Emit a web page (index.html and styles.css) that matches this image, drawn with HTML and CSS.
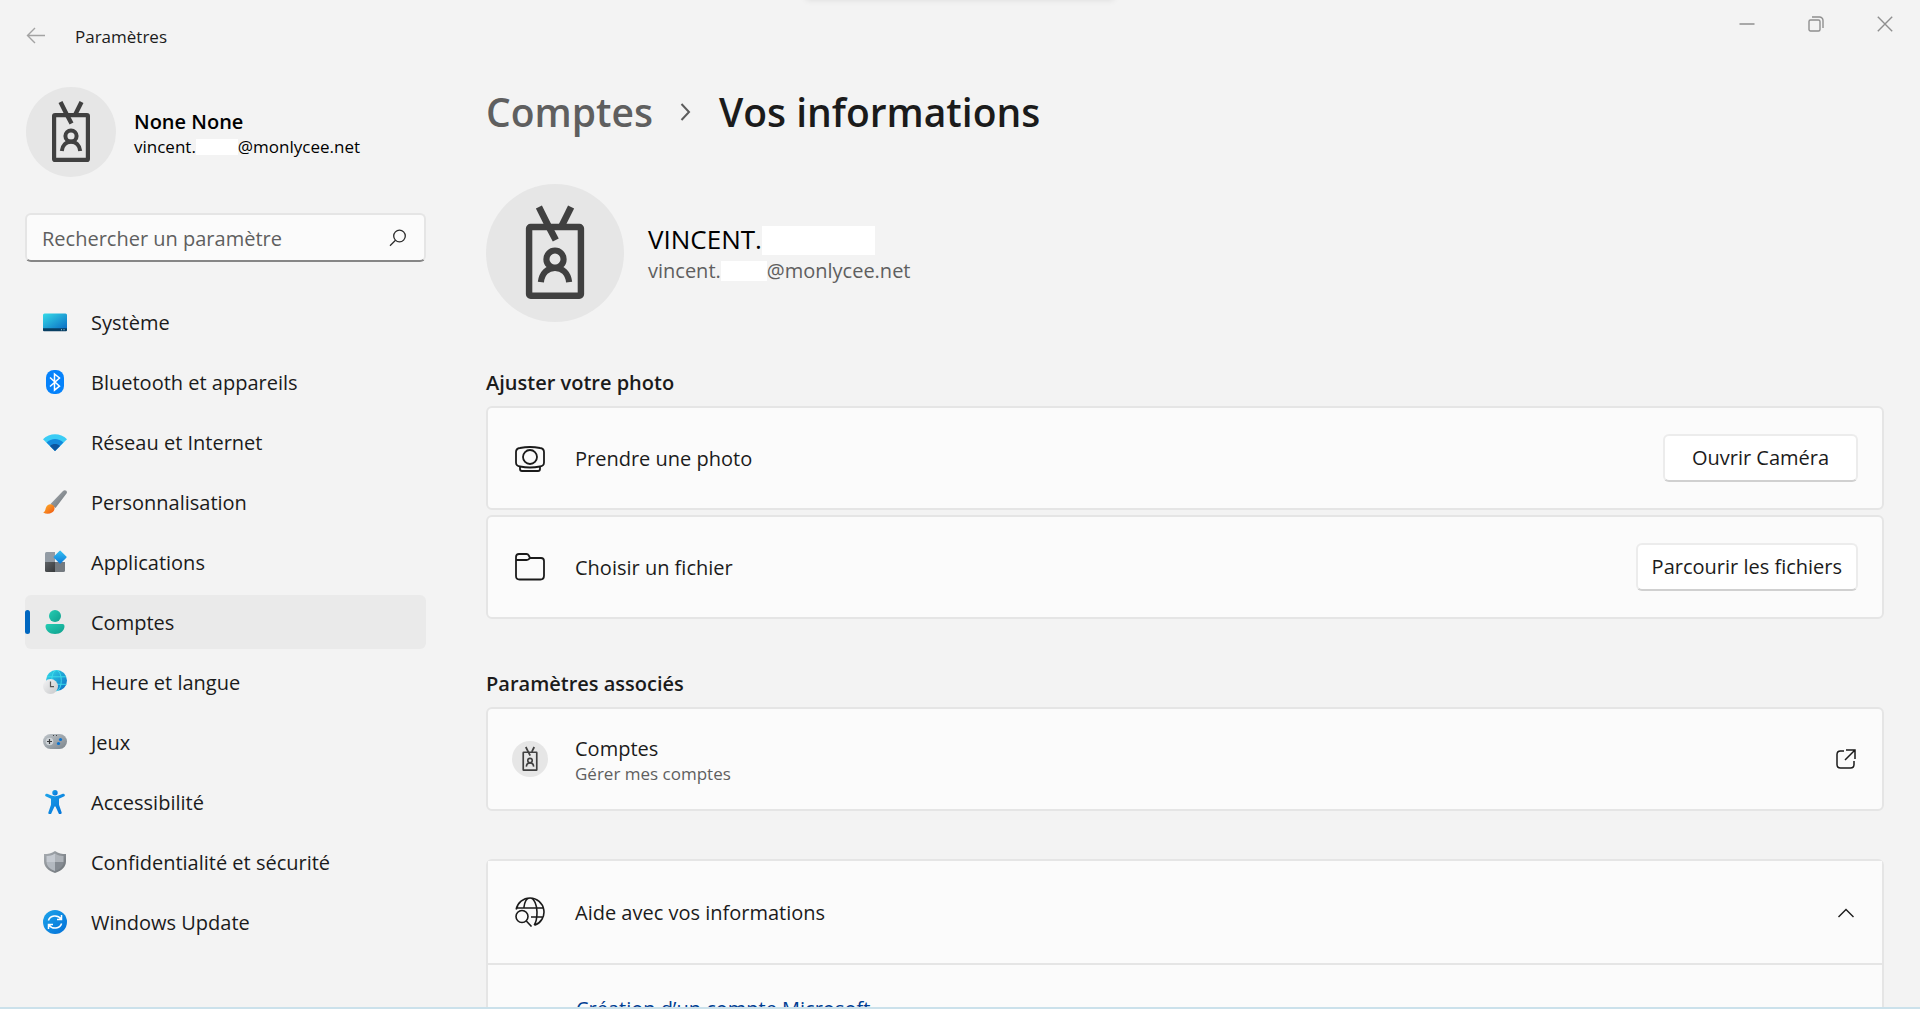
FILE: index.html
```
<!DOCTYPE html>
<html lang="fr">
<head>
    <meta charset="UTF-8">
    <meta name="viewport" content="width=device-width, initial-scale=1.0">
    <title>Paramètres</title>
    <link rel="stylesheet" href="styles.css">
</head>
<body>
    <svg class="sprite" aria-hidden="true">
        <defs>
            <linearGradient id="g-screen" x1="0" y1="0" x2="1" y2="1">
                <stop offset="0" stop-color="#35dbe8"/>
                <stop offset="1" stop-color="#0a6cc4"/>
            </linearGradient>
            <linearGradient id="g-teal" x1="0" y1="0" x2="1" y2="1">
                <stop offset="0" stop-color="#25cdb4"/>
                <stop offset="1" stop-color="#0f9f8c"/>
            </linearGradient>
            <linearGradient id="g-blue" x1="0" y1="0" x2="1" y2="1">
                <stop offset="0" stop-color="#1da4ea"/>
                <stop offset="1" stop-color="#0270d8"/>
            </linearGradient>
            <linearGradient id="g-gray" x1="0" y1="0" x2="1" y2="1">
                <stop offset="0" stop-color="#c0c6cb"/>
                <stop offset="1" stop-color="#7b848b"/>
            </linearGradient>
            <linearGradient id="g-shield" x1="0" y1="0" x2="1" y2="1">
                <stop offset="0" stop-color="#a9aeb3"/>
                <stop offset="1" stop-color="#6a7075"/>
            </linearGradient>
            <linearGradient id="g-dark" x1="0" y1="0" x2="1" y2="1">
                <stop offset="0" stop-color="#5d6164"/>
                <stop offset="1" stop-color="#37393b"/>
            </linearGradient>
            <linearGradient id="g-diamond" x1="0" y1="0" x2="1" y2="1">
                <stop offset="0" stop-color="#35c3f3"/>
                <stop offset="1" stop-color="#0b78d8"/>
            </linearGradient>
            <linearGradient id="g-orange" x1="0" y1="0" x2="1" y2="1">
                <stop offset="0" stop-color="#ffb52b"/>
                <stop offset="1" stop-color="#ee5413"/>
            </linearGradient>
            <linearGradient id="g-clock" x1="0" y1="0" x2="1" y2="1">
                <stop offset="0" stop-color="#f4f4f5"/>
                <stop offset="1" stop-color="#c6c8ca"/>
            </linearGradient>
        </defs>
        <symbol id="badge" viewBox="0 0 90 90">
            <circle cx="45" cy="45" r="45" fill="#e6e6e6"/>
            <g fill="none" stroke="#404040" stroke-width="4.2" stroke-linejoin="round">
                <rect x="28.1" y="28.1" width="33.8" height="44.8" rx="1"/>
                <path d="M34.500 15l6.500 13 4.500 8.500" stroke-width="4.400"/>
                <path d="M55.500 15L49.500 27" stroke-width="4.400"/>
                <circle cx="45" cy="49" r="5.600" stroke-width="4"/>
                <path d="M35.800 64c.6-5.800 4.300-9.300 9.200-9.300s8.600 3.500 9.200 9.300" stroke-width="4"/>
            </g>
        </symbol>
    </svg>

    <div class="window">
        <header class="titlebar">
            <button type="button" class="back" aria-label="Retour">
                <svg width="20" height="18" viewBox="0 0 20 18" fill="none" stroke="#a3a3a3" stroke-width="1.400"><path d="M19 8.500H1.500M9 1L1.500 8.500 9 16"/></svg>
            </button>
            <span class="app-title">Paramètres</span>
            <div class="controls">
                <button type="button" aria-label="Réduire">
                    <svg width="16" height="16" viewBox="0 0 16 16" fill="none" stroke="#8f8f8f" stroke-width="1.500"><path d="M0.500 8h15"/></svg>
                </button>
                <button type="button" aria-label="Restaurer">
                    <svg width="16" height="16" viewBox="0 0 16 16" fill="none" stroke="#8f8f8f" stroke-width="1.400"><rect x="1" y="4" width="11" height="11" rx="1.500"/><path d="M4 1h7.500a3.500 3.500 0 0 1 3.500 3.500V12"/></svg>
                </button>
                <button type="button" aria-label="Fermer">
                    <svg width="16" height="16" viewBox="0 0 16 16" fill="none" stroke="#8f8f8f" stroke-width="1.400"><path d="M.8.8l14.400 14.400M15.200.8L.8 15.200"/></svg>
                </button>
            </div>
        </header>

        <div class="content">
            <aside class="sidebar">
                <div class="profile">
                    <svg class="avatar"><use href="#badge"/></svg>
                    <div class="profile-text">
                        <p class="profile-name">None None</p>
                        <p class="profile-mail">vincent.<span class="mask"></span>@monlycee.net</p>
                    </div>
                </div>

                <form class="search">
                    <input type="text" placeholder="Rechercher un paramètre" aria-label="Rechercher un paramètre">
                    <button type="submit" aria-label="Rechercher">
                        <svg width="18" height="18" viewBox="0 0 18 18" fill="none" stroke="#2b2b2b" stroke-width="1.300"><circle cx="10.500" cy="7" r="5.800"/><path d="M6.500 11.200L1 16.700"/></svg>
                    </button>
                </form>

                <nav>
                    <a href="#">
                        <svg viewBox="0 0 24 24"><path d="M0 5a1.500 1.500 0 0 1 1.500-1.500h21A1.500 1.500 0 0 1 24 5v14H0z" fill="url(#g-screen)"/><path d="M0 18.300h24v1.900a1 1 0 0 1-1 1H1a1 1 0 0 1-1-1z" fill="#083f63"/><path d="M18 19.200h1v1h-1zM20.500 19.200h1v1h-1z" fill="#a8d0e4"/></svg>
                        Système
                    </a>
                    <a href="#">
                        <svg viewBox="0 0 24 24"><rect x="3" width="18" height="24" rx="8" fill="#0582fb"/><path d="M7 7.500l9.500 8.700-5 4V4l5 4L7 16.500" fill="none" stroke="#fff" stroke-width="1.500"/></svg>
                        Bluetooth et appareils
                    </a>
                    <a href="#">
                        <svg viewBox="0 0 24 24"><path d="M0 9.200C6.500 2.500 17.500 2.500 24 9.200L12 21z" fill="#3accf5"/><path d="M3.600 12.600c4.600-4.700 12.200-4.700 16.800 0L12 21z" fill="#1489dc"/><path d="M7 15.900c2.800-2.600 7.200-2.600 10 0L12 21z" fill="#0c559f"/></svg>
                        Réseau et Internet
                    </a>
                    <a href="#">
                        <svg viewBox="0 0 24 24"><path d="M7.500 14L20 .9c1-1 2.500-1 3.300-.1.800.8.800 1.800.2 2.800L12.500 18z" fill="url(#g-shield)"/><path d="M.2 22.500c2-1 2-2.500 2.600-4.500.9-3.300 4.600-5 7.400-2.800 2.400 2.200 1.400 5.800-1.200 7.300-2.500 1.500-6 1.700-8.800 0z" fill="url(#g-orange)"/></svg>
                        Personnalisation
                    </a>
                    <a href="#">
                        <svg viewBox="0 0 24 24"><path d="M3.500 2H12v10H2V3.500A1.500 1.500 0 0 1 3.500 2z" fill="#929ba4"/><path d="M12 12h10v8.500a1.500 1.500 0 0 1-1.500 1.500H12z" fill="#747a80"/><path d="M2 12h10v10H3.500A1.500 1.500 0 0 1 2 20.500z" fill="url(#g-dark)"/><rect x="12.200" y="2.200" width="9.800" height="9.800" rx="1" transform="rotate(45 17.100 7.100)" fill="url(#g-diamond)"/></svg>
                        Applications
                    </a>
                    <a href="#" class="active">
                        <svg viewBox="0 0 24 24"><circle cx="12" cy="6" r="6" fill="url(#g-teal)"/><path d="M4.500 14h15a2 2 0 0 1 2 2c0 4.600-3.800 8-9.500 8s-9.500-3.400-9.500-8a2 2 0 0 1 2-2z" fill="url(#g-teal)"/></svg>
                        Comptes
                    </a>
                    <a href="#">
                        <svg viewBox="0 0 24 24"><circle cx="13.500" cy="10.500" r="10.500" fill="url(#g-screen)"/><g fill="none" stroke="#3fe0ec" stroke-width=".9"><ellipse cx="13.500" cy="10.500" rx="4.800" ry="10.300"/><path d="M4 6.800h19M3.500 14.300h20"/></g><circle cx="7.500" cy="16.500" r="7.500" fill="url(#g-clock)"/><path d="M7.500 11.500v5.200h3.500" fill="none" stroke="#555" stroke-width="1.200"/></svg>
                        Heure et langue
                    </a>
                    <a href="#">
                        <svg viewBox="0 0 24 24"><rect y="4" width="24" height="15" rx="7.500" fill="url(#g-gray)"/><circle cx="6.500" cy="11.500" r="3.800" fill="#ced3d7"/><path d="M6.500 9v5M4 11.500h5" stroke="#383b3e" stroke-width="1.200"/><circle cx="17.500" cy="9.500" r="1.600" fill="#0a72d0"/><circle cx="15.500" cy="13.500" r="1.600" fill="#0a72d0"/><path d="M10 5h1v1h-1zM13 5h1v1h-1z" fill="#444"/></svg>
                        Jeux
                    </a>
                    <a href="#">
                        <svg viewBox="0 0 24 24" fill="url(#g-blue)"><circle cx="12" cy="2.700" r="2.700"/><path d="M4.200 3.800l5 1.900q2.800.9 5.600 0l5-1.900a1.500 1.500 0 0 1 1.100 2.800L16 8.700v6.100l2.500 7.300a1.500 1.500 0 0 1-2.900 1.200L12.500 16.500h-1l-3.100 6.800a1.500 1.500 0 0 1-2.900-1.200L8 14.800V8.700L3.100 6.600a1.500 1.500 0 0 1 1.100-2.800z"/></svg>
                        Accessibilité
                    </a>
                    <a href="#">
                        <svg viewBox="0 0 24 24"><path d="M12 1c3.500 2.500 7 3 11 3v7c0 6-4 9.500-11 12C5 20.500 1 17 1 11V4c4 0 7.500-.5 11-3z" fill="url(#g-shield)"/><path d="M12 3.500c2.800 2 5.500 2.400 8.500 2.500V12H12z" fill="#aeb3b9"/><path d="M12 3.500C9.200 5.500 6.500 5.900 3.500 6v6H12z" fill="#c5cad1"/><path d="M3.500 12c.3 4.500 3.500 7 8.500 9v-9z" fill="#b3b9c0"/><path d="M20.500 12c-.3 4.500-3.500 7-8.500 9v-9z" fill="#858b92"/></svg>
                        Confidentialité et sécurité
                    </a>
                    <a href="#">
                        <svg viewBox="0 0 24 24"><circle cx="12" cy="12" r="12" fill="url(#g-blue)"/><path d="M5.400 10.500c1.600-5.200 9-6.400 12.800-1.500M18.600 13.500c-1.600 5.200-9 6.400-12.800 1.500M18.500 5v4.500H14M5.500 19v-4.500H10" fill="none" stroke="#fff" stroke-width="1.500"/></svg>
                        Windows Update
                    </a>
                </nav>
            </aside>

            <main>
                <h1><a href="#">Comptes</a><svg width="14" height="20" viewBox="0 0 14 20" fill="none" stroke="#5c5c5c" stroke-width="2"><path d="M2.500 2l7.500 8-7.500 8"/></svg>Vos informations</h1>

                <div class="account">
                    <svg class="avatar"><use href="#badge"/></svg>
                    <div>
                        <p class="account-name">VINCENT.<span class="mask"></span></p>
                        <p class="account-mail">vincent.<span class="mask"></span>@monlycee.net</p>
                    </div>
                </div>

                <section>
                    <h2>Ajuster votre photo</h2>
                    <div class="card">
                        <svg class="card-icon" viewBox="0 -2 30 30" fill="none" stroke="#1b1b1b" stroke-width="1.800"><path d="M5 3Q15 1 25 3q4 .5 4 4v10.500q0 3.500-4 4-10 2-20 0-4-.5-4-4V7q0-3.500 4-4zM5 22v2q0 2 2 2h16q2 0 2-2v-2"/><circle cx="15" cy="12" r="7"/></svg>
                        <span class="card-label">Prendre une photo</span>
                        <button type="button" class="btn btn-wide">Ouvrir Caméra</button>
                    </div>
                    <div class="card">
                        <svg class="card-icon" viewBox="0 0 30 30" fill="none" stroke="#1b1b1b" stroke-width="1.800"><path d="M1 8V5q0-3 3-3h7.500q1.500 0 2.300 1.500L15 6h11q3 0 3 3v14.500q0 4-3.500 4h-21Q1 27.500 1 24zh10.500q1.500 0 2.300-.8L15 6"/></svg>
                        <span class="card-label">Choisir un fichier</span>
                        <button type="button" class="btn">Parcourir les fichiers</button>
                    </div>
                </section>

                <section>
                    <h2>Paramètres associés</h2>
                    <a href="#" class="card">
                        <svg class="card-icon avatar"><use href="#badge"/></svg>
                        <span class="card-label">Comptes<small>Gérer mes comptes</small></span>
                        <svg class="card-end" viewBox="0 0 20 20" fill="none" stroke="#1b1b1b" stroke-width="1.500"><path d="M8 2H4.500Q1 2 1 5.500v10Q1 19 4.500 19h10q3.500 0 3.500-3.500V12M10 1h9v9M19 1L9 11"/></svg>
                    </a>
                </section>

                <section>
                    <div class="expander">
                        <button type="button" class="card" aria-expanded="true">
                            <svg class="card-icon" viewBox="0 0 30 30" fill="none" stroke="#1b1b1b" stroke-width="1.600"><path d="M1.200 12.500a14 14 0 1 1 18.300 15.800M2 11h26M16 20h12.500M8.800 11C9.500 5 12 1 15 1c4.500 0 7 8 7 14 0 5.500-1 10.500-2.800 13.200"/><circle cx="7" cy="19.500" r="6"/><path d="M11.300 24l5.200 5.500"/></svg>
                            <span class="card-label">Aide avec vos informations</span>
                            <svg class="card-end" viewBox="0 0 20 20" fill="none" stroke="#1b1b1b" stroke-width="1.400"><path d="M2.500 15l7.500-7.500 7.500 7.500"/></svg>
                        </button>
                        <div class="expander-body">
                            <a href="#">Création d’un compte Microsoft</a>
                        </div>
                    </div>
                </section>
            </main>
        </div>
    </div>
</body>
</html>
```
FILE: styles.css
```
* {
    box-sizing: border-box;
}
body {
    margin: 0;
    background-color: #f3f3f3;
    color: #1b1b1b;
    font-family: "Open Sans", "Noto Sans", sans-serif;
    font-size: 20px;
    line-height: 28px;
}
p, h1, h2 {
    margin: 0;
}
a {
    color: inherit;
    text-decoration: none;
}
button, input {
    font: inherit;
    color: inherit;
}
button {
    background: none;
    border: none;
    padding: 0;
}
svg {
    display: block;
    flex-shrink: 0;
}
.sprite {
    position: absolute;
    width: 0;
    height: 0;
}
.window {
    position: relative;
    height: 100vh;
    display: flex;
    flex-direction: column;
    overflow: hidden;
    border-bottom: 2px solid #cbe1eb;
}
/* ombre en haut de la fenêtre */
.window::before {
    content: "";
    position: absolute;
    top: -8px;
    left: 42%;
    width: 16%;
    height: 8px;
    box-shadow: 0 0 6px rgba(0,0,0,0.1);
}

/* barre de titre */
.titlebar {
    display: flex;
    align-items: center;
    height: 72px;
    padding: 0 1px 0 26px;
    flex-shrink: 0;
}
.back {
    width: 49px;
}
.app-title {
    padding-top: 2px;
    font-size: 17px;
}
.controls {
    display: flex;
    align-self: flex-start;
    margin-left: auto;
}
.controls button {
    display: flex;
    align-items: center;
    justify-content: center;
    width: 69px;
    height: 48px;
}
.content {
    display: flex;
    flex: 1;
    min-height: 0;
}

/* menu de gauche */
.sidebar {
    width: 426px;
    padding: 15px 0 0 25px;
    flex-shrink: 0;
}
.profile {
    display: flex;
    align-items: center;
    gap: 18px;
    padding-left: 1px;
    color: #000;
}
.profile .avatar {
    width: 90px;
    height: 90px;
}
.profile-text {
    padding-top: 4px;
}
.profile-name {
    font-weight: 600;
    line-height: 26px;
}
.profile-mail {
    font-size: 17px;
    line-height: 24px;
}
.mask {
    display: inline-block;
    width: 42px;
    height: 16px;
    background-color: #fff;
    vertical-align: -2px;
}
.search {
    display: flex;
    align-items: center;
    height: 49px;
    margin: 36px 0 33px;
    padding: 0 17px 0 15px;
    background-color: #fbfbfb;
    border: 2px solid #e5e5e5;
    border-bottom-color: #868686;
    border-radius: 6px;
}
.search input {
    flex: 1;
    min-width: 0;
    padding: 2px 0 0;
    background: none;
    border: none;
    outline: none;
}
.search input::placeholder {
    color: #5f5f5f;
    opacity: 1;
}
nav {
    display: flex;
    flex-direction: column;
    gap: 6px;
}
nav a {
    display: flex;
    align-items: center;
    gap: 24px;
    height: 54px;
    padding: 2px 0 0 18px;
    border-radius: 6px;
}
nav svg {
    width: 24px;
    height: 24px;
    margin-bottom: 2px;
}
nav .active {
    position: relative;
    background-color: #eaeaea;
}
nav .active::before {
    content: "";
    position: absolute;
    left: 0;
    top: 15px;
    width: 5px;
    height: 24px;
    border-radius: 3px;
    background-color: #0067c0;
}

/* contenu */
main {
    flex: 1;
    min-width: 0;
    padding: 12px 36px 0 60px;
}
h1 {
    display: flex;
    align-items: center;
    gap: 26px;
    font-size: 39px;
    font-weight: 600;
    line-height: 56px;
}
h1 a {
    color: #5f5f5f;
}
.account {
    display: flex;
    align-items: center;
    gap: 24px;
    margin: 44px 0;
}
.account .avatar {
    width: 138px;
    height: 138px;
}
.account-name {
    font-size: 26px;
    line-height: 36px;
    color: #000;
}
.account-name .mask {
    width: 113px;
    height: 29px;
    vertical-align: -6px;
}
.account-mail {
    color: #5f5f5f;
}
.account-mail .mask {
    width: 46px;
    height: 20px;
    vertical-align: -3px;
}
section {
    margin-bottom: 48px;
}
h2 {
    margin-bottom: 6px;
    font-size: 20px;
    font-weight: 600;
    line-height: 34px;
}
.card {
    display: flex;
    align-items: center;
    width: 100%;
    height: 104px;
    padding: 0 24px 0 27px;
    background-color: #fbfbfb;
    border: 2px solid #e5e5e5;
    border-radius: 6px;
    text-align: left;
}
.card + .card {
    margin-top: 5px;
}
.card-icon {
    width: 30px;
    height: 30px;
    margin-right: 30px;
}
.card-icon.avatar {
    width: 36px;
    height: 36px;
    margin: 0 27px 0 -3px;
}
.card-label {
    flex: 1;
    padding-top: 2px;
}
.card-label small {
    display: block;
    font-size: 17px;
    line-height: 22px;
    color: #5f5f5f;
}
.card-end {
    width: 20px;
    height: 20px;
    margin-right: 2px;
}
.btn {
    height: 48px;
    padding: 0 14px;
    background-color: #fff;
    border: 2px solid #ececec;
    border-bottom-color: #d0d0d0;
    border-radius: 6px;
}
.btn-wide {
    min-width: 195px;
}
.expander {
    background-color: #fbfbfb;
    border: 2px solid #e5e5e5;
    border-radius: 6px;
}
.expander .card {
    border-width: 0 0 2px;
    border-radius: 0;
}
.expander-body {
    padding: 30px 88px;
    color: #003e92;
}
```
